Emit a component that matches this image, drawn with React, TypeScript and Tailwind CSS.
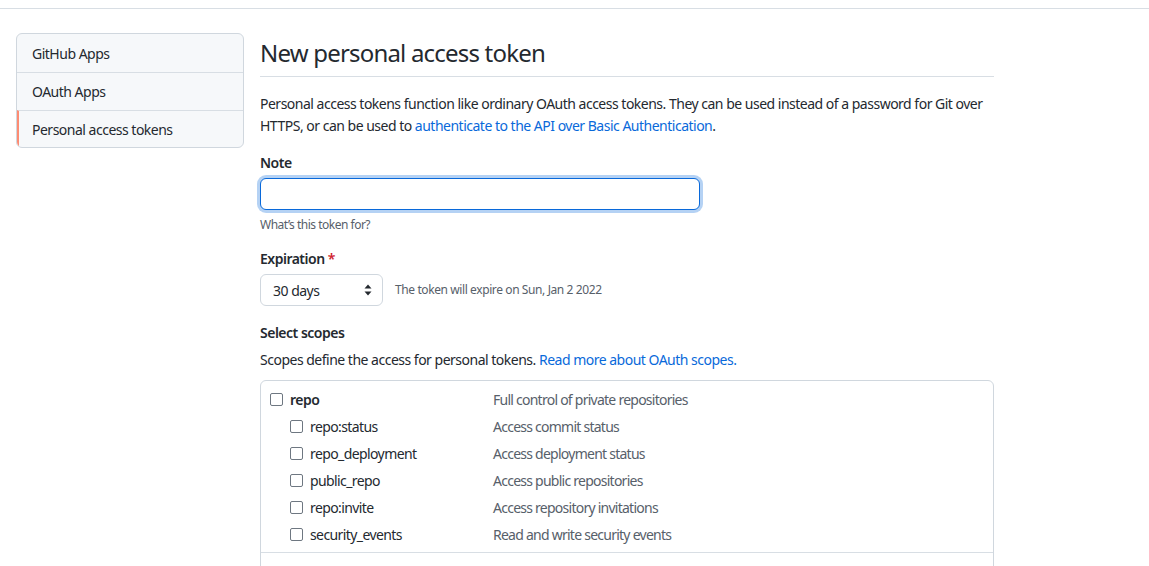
const nav = [
  { label: 'GitHub Apps', active: false },
  { label: 'OAuth Apps', active: false },
  { label: 'Personal access tokens', active: true },
]

const repoScopes = [
  { name: 'repo:status', desc: 'Access commit status' },
  { name: 'repo_deployment', desc: 'Access deployment status' },
  { name: 'public_repo', desc: 'Access public repositories' },
  { name: 'repo:invite', desc: 'Access repository invitations' },
  { name: 'security_events', desc: 'Read and write security events' },
]

function Box() {
  return (
    <span className="inline-block size-[13px] shrink-0 rounded-[2px] border border-[#6e7781] bg-white" />
  )
}

export default function App() {
  return (
    <div
      className="h-[566px] overflow-hidden bg-white text-[14px] tracking-[-0.5px] text-[#24292f]"
      style={{ fontFamily: '"Noto Sans", "Liberation Sans", sans-serif' }}
    >
      <div className="h-[9px] border-b border-[#d8dee4]" />

      <div className="flex gap-4 pl-4 pt-6">
        <nav className="h-[115px] w-[228px] shrink-0 overflow-hidden rounded-md border border-[#d0d7de] bg-[#f6f8fa]">
          {nav.map((item, i) => (
            <div
              key={item.label}
              className={`flex h-[38px] items-center px-[15px] ${i > 0 ? 'border-t border-[#d8dee4]' : ''} ${
                item.active ? 'border-l-2 border-l-[#fd8c73] pl-[13px]' : ''
              }`}
            >
              {item.label}
            </div>
          ))}
        </nav>

        <main className="w-[734px]">
          <h1 className="border-b border-[#d8dee4] pb-[6px] pt-[3px] text-[24px] font-normal leading-[34px] tracking-[-0.8px]">
            New personal access token
          </h1>

          <p className="mt-[16px] leading-[22px]">
            Personal access tokens function like ordinary OAuth access tokens. They can be used instead of a
            password for Git over HTTPS, or can be used to{' '}
            <a className="text-[#0969da]">authenticate to the API over Basic Authentication</a>.
          </p>

          <div className="mt-[16px] font-semibold leading-5">Note</div>
          <input
            className="mt-[5px] block h-[32px] w-[440px] rounded-md border border-[#0969da] bg-white px-3 shadow-[0_0_0_3px_rgba(9,105,218,0.3)] outline-none"
            aria-label="Note"
          />
          <div className="mt-[5px] text-[12px] leading-5 text-[#57606a]">What’s this token for?</div>

          <div className="mt-[14px] font-semibold leading-5">
            Expiration <span className="text-[#cf222e]">*</span>
          </div>
          <div className="mt-[5px] flex items-center gap-3">
            <div className="flex h-[32px] w-[123px] items-center justify-between rounded-md border border-[#d0d7de] bg-white pl-3 pr-[10px]">
              <span>30 days</span>
              <svg width="8" height="12" viewBox="0 0 8 12" className="fill-[#24292f]">
                <path d="M4 0.5 L7.5 4.5 H0.5 Z" />
                <path d="M4 11.5 L7.5 7.5 H0.5 Z" />
              </svg>
            </div>
            <span className="text-[12px] tracking-[-0.4px] text-[#57606a]">The token will expire on Sun, Jan 2 2022</span>
          </div>

          <div className="mt-[17px] font-semibold leading-5">Select scopes</div>
          <p className="mt-[7px] leading-5">
            Scopes define the access for personal tokens.{' '}
            <a className="text-[#0969da]">Read more about OAuth scopes.</a>
          </p>

          <div className="mt-[10px] rounded-md border border-[#d0d7de]">
            <div className="px-[9px] pb-[4px] pt-[5px]">
              <div className="flex h-[27px] items-center">
                <div className="flex w-[223px] items-center gap-[7px]">
                  <Box />
                  <span className="font-semibold">repo</span>
                </div>
                <span className="tracking-[-0.75px] text-[#57606a]">Full control of private repositories</span>
              </div>
              {repoScopes.map((s) => (
                <div key={s.name} className="flex h-[27px] items-center">
                  <div className="flex w-[223px] items-center gap-[7px] pl-5">
                    <Box />
                    <span className="tracking-[-0.6px]">{s.name}</span>
                  </div>
                  <span className="tracking-[-0.75px] text-[#57606a]">{s.desc}</span>
                </div>
              ))}
            </div>
            <div className="border-t border-[#d8dee4] px-[9px] pt-[12px]">
              <div className="flex h-[27px] items-center">
                <Box />
              </div>
            </div>
          </div>
        </main>
      </div>
    </div>
  )
}
